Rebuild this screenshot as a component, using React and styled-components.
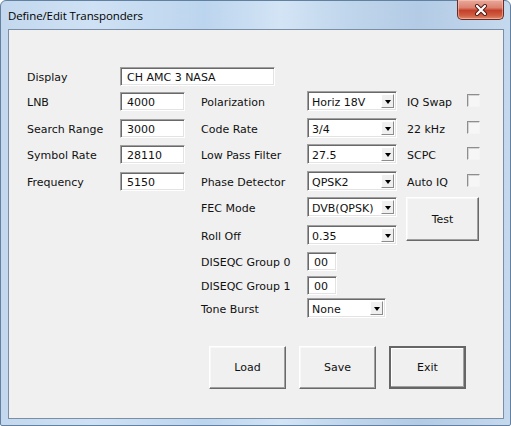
import { Fragment } from "react";
import styled, { createGlobalStyle } from "styled-components";

const GlobalStyle = createGlobalStyle`
  html, body {
    margin: 0;
    padding: 0;
    background: #ffffff;
    overflow: hidden;
  }
`;

const Window = styled.div`
  box-sizing: border-box;
  width: 511px;
  height: 426px;
  display: flex;
  flex-direction: column;
  border: 1px solid #62809f;
  border-radius: 6px 6px 2px 2px;
  background: linear-gradient(
    90deg,
    #c3d8ee 0%,
    #cfe1f4 18%,
    #bcd5ee 40%,
    #d3e4f5 55%,
    #c0d6ec 68%,
    #b3cbe5 82%,
    #c5d9ee 100%
  );
`;

const TitleBar = styled.div`
  height: 28px;
  display: flex;
  align-items: flex-start;
  justify-content: space-between;
  flex-shrink: 0;
`;

const Title = styled.span`
  margin: 7px 0 0 7px;
  font-family: "Open Sans", "Noto Sans", sans-serif;
  font-size: 11.5px;
  color: #000;
  letter-spacing: -0.1px;
`;

const CloseButton = styled.div`
  box-sizing: border-box;
  width: 47px;
  height: 20px;
  margin: -1px 6px 0 0;
  display: flex;
  align-items: center;
  justify-content: center;
  border: 1px solid #6a2b22;
  border-top: none;
  border-radius: 0 0 5px 5px;
  background: linear-gradient(
    180deg,
    #e9a99a 0%,
    #dc8270 40%,
    #c3402a 55%,
    #cf5a3f 80%,
    #e08a6a 100%
  );
  box-shadow: inset 0 0 0 1px rgba(255, 210, 200, 0.5);
`;

const Client = styled.div`
  flex: 1;
  margin: 0 6px 6px 7px;
  border: 1px solid #7a8ea5;
  background: #f0f0f0;
  display: flex;
  flex-direction: column;
  padding: 37px 0 0 18px;
  font-family: "DejaVu Sans", Verdana, sans-serif;
  font-size: 11px;
  color: #111;
`;

const Form = styled.div`
  display: grid;
  grid-template-columns: 93px 65px 16px 106px 89px 11px 60px 13px;
  grid-template-rows: 25px 27px 26px 27px 26px 28px 26px 24px 23px 19px;
  align-items: start;
`;

const Label = styled.div`
  grid-column: ${({ $col }) => $col};
  grid-row: ${({ $row }) => $row};
  height: 19px;
  line-height: 21px;
  white-space: nowrap;
`;

const sunken = `
  box-sizing: border-box;
  border: 1px solid;
  border-color: #a0a0a0 #ffffff #ffffff #a0a0a0;
  box-shadow: inset 1px 1px 0 #696969, inset -1px -1px 0 #e3e3e3;
  background: #ffffff;
`;

const TextBox = styled.div`
  ${sunken}
  grid-column: ${({ $col }) => $col};
  grid-row: ${({ $row }) => $row};
  width: ${({ $w }) => $w}px;
  height: 19px;
  padding-left: 6px;
  line-height: 19px;
  white-space: nowrap;
`;

const Select = styled.div`
  ${sunken}
  grid-column: ${({ $col }) => $col};
  grid-row: ${({ $row }) => $row};
  width: ${({ $w }) => $w}px;
  height: 20px;
  display: flex;
  align-items: stretch;
  padding: 2px;
  margin-top: -1px;
`;

const SelectValue = styled.div`
  flex: 1;
  padding-left: 2px;
  line-height: 17px;
  white-space: nowrap;
  overflow: hidden;
`;

const ArrowButton = styled.div`
  box-sizing: border-box;
  width: 13px;
  display: flex;
  align-items: center;
  justify-content: center;
  background: #f0f0f0;
  border-right: 1px solid #8c8c8c;
  border-bottom: 1px solid #8c8c8c;
  border-top: 1px solid #fff;
  border-left: 1px solid #fff;
`;

const Arrow = styled.div`
  width: 0;
  height: 0;
  border-left: 3.5px solid transparent;
  border-right: 3.5px solid transparent;
  border-top: 4px solid #000;
  margin-top: 1px;
`;

const CheckBox = styled.div`
  box-sizing: border-box;
  grid-column: 8;
  grid-row: ${({ $row }) => $row};
  width: 13px;
  height: 13px;
  margin-top: 2px;
  border-top: 1px solid #8e8e8e;
  border-left: 1px solid #8e8e8e;
  border-right: 1px solid #f4f4f4;
  border-bottom: 1px solid #f4f4f4;
  background: #f6f6f6;
  box-shadow: inset 1px 1px 0 #d4d4d4;
`;

const Button = styled.div`
  box-sizing: border-box;
  width: ${({ $w }) => $w || 77}px;
  height: ${({ $h }) => $h || 43}px;
  display: flex;
  align-items: center;
  justify-content: center;
  background: #f0f0f0;
  border: 1px solid;
  border-color: #ffffff #696969 #696969 #ffffff;
  box-shadow: inset -1px -1px 0 #a0a0a0, inset 1px 1px 0 #f8f8f8;
  ${({ $default }) =>
    $default &&
    `
    border: 2px solid #666666;
    box-shadow: inset -1px -1px 0 #a0a0a0, inset 1px 1px 0 #ffffff;
  `}
`;

const TestCell = styled.div`
  grid-column: 7 / 9;
  grid-row: 6 / 8;
  margin: -1px 0 0 -1px;
`;

const ButtonRow = styled.div`
  display: flex;
  gap: 13px;
  margin: 28px 0 0 182px;
`;

function Combo({ col = 5, row, w = 90, value }) {
  return (
    <Select $col={col} $row={row} $w={w}>
      <SelectValue>{value}</SelectValue>
      <ArrowButton>
        <Arrow />
      </ArrowButton>
    </Select>
  );
}

const leftFields = [
  ["LNB", "4000"],
  ["Search Range", "3000"],
  ["Symbol Rate", "28110"],
  ["Frequency", "5150"],
];

const combos = [
  ["Polarization", "Horiz 18V"],
  ["Code Rate", "3/4"],
  ["Low Pass Filter", "27.5"],
  ["Phase Detector", "QPSK2"],
  ["FEC Mode", "DVB(QPSK)"],
  ["Roll Off", "0.35"],
];

const checks = ["IQ Swap", "22 kHz", "SCPC", "Auto IQ"];

export default function App() {
  return (
    <>
      <GlobalStyle />
      <Window>
        <TitleBar>
          <Title>Define/Edit Transponders</Title>
          <CloseButton>
            <svg width="14" height="12" viewBox="0 0 14 12">
              <path
                d="M3 2 L11 10 M11 2 L3 10"
                stroke="#4a1a14"
                strokeWidth="4"
                strokeLinecap="round"
              />
              <path
                d="M3 2 L11 10 M11 2 L3 10"
                stroke="#ffffff"
                strokeWidth="2.2"
                strokeLinecap="round"
              />
            </svg>
          </CloseButton>
        </TitleBar>
        <Client>
          <Form>
            <Label $col={1} $row={1}>Display</Label>
            <TextBox $col="2 / 6" $row={1} $w={155}>
              CH AMC 3 NASA
            </TextBox>

            {leftFields.map(([label, value], i) => (
              <Fragment key={label}>
                <Label $col={1} $row={i + 2}>{label}</Label>
                <TextBox $col={2} $row={i + 2} $w={65}>{value}</TextBox>
              </Fragment>
            ))}

            {combos.map(([label, value], i) => (
              <Fragment key={label}>
                <Label $col={4} $row={i + 2}>{label}</Label>
                <Combo row={i + 2} value={value} />
              </Fragment>
            ))}

            <Label $col={4} $row={8}>DISEQC Group 0</Label>
            <TextBox $col={5} $row={8} $w={30}>00</TextBox>
            <Label $col={4} $row={9}>DISEQC Group 1</Label>
            <TextBox $col={5} $row={9} $w={30}>00</TextBox>
            <Label $col={4} $row={10}>Tone Burst</Label>
            <Combo row={10} w={79} value="None" />

            {checks.map((label, i) => (
              <Fragment key={label}>
                <Label $col={7} $row={i + 2}>{label}</Label>
                <CheckBox $row={i + 2} />
              </Fragment>
            ))}

            <TestCell>
              <Button $w={73} $h={44}>Test</Button>
            </TestCell>
          </Form>
          <ButtonRow>
            <Button>Load</Button>
            <Button>Save</Button>
            <Button $default>Exit</Button>
          </ButtonRow>
        </Client>
      </Window>
    </>
  );
}
